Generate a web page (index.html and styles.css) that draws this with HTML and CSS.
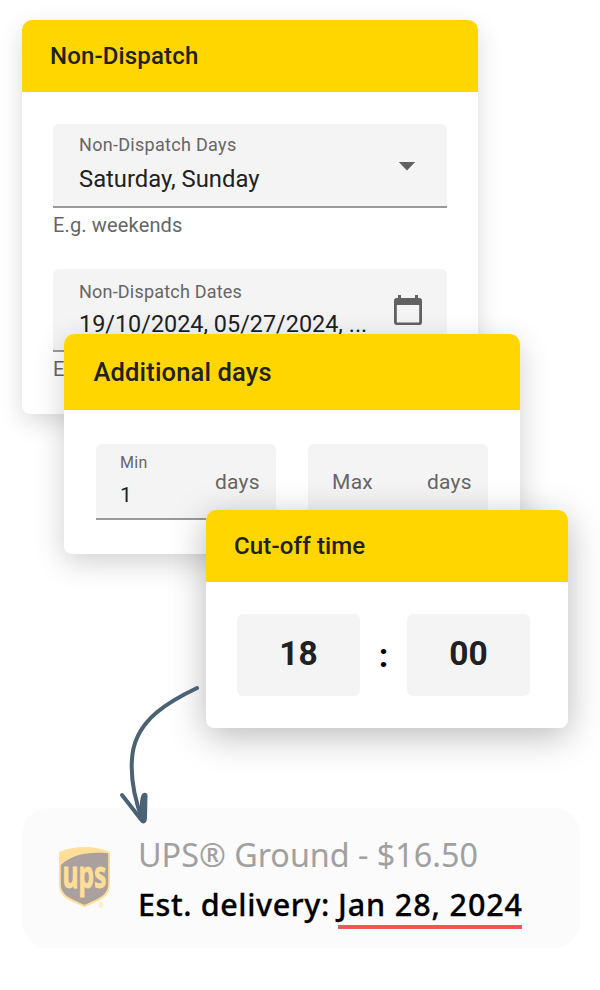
FILE: index.html
```
<!DOCTYPE html>
<html lang="en">
<head>
  <meta charset="UTF-8">
  <meta name="viewport" content="width=device-width, initial-scale=1.0">
  <title>Delivery Settings</title>
  <link rel="stylesheet" href="styles.css">
</head>
<body>

  <main class="page">
    <!-- Non-Dispatch -->
    <section class="card card-dispatch">
      <h2 class="card-title">Non-Dispatch</h2>
      <div class="card-body">
        <div class="field">
          <div class="field-text">
            <span class="label">Non-Dispatch Days</span>
            <span class="value value-days">Saturday, Sunday</span>
          </div>
          <svg class="arrow-down" width="18" height="9" viewBox="0 0 18 9"><path d="M.8 0h16.4L9 8.6z" fill="#616161"/></svg>
        </div>
        <p class="hint">E.g. weekends</p>

        <div class="field field-dates">
          <div class="field-text">
            <span class="label label-dates">Non-Dispatch Dates</span>
            <span class="value value-dates">19/10/2024, 05/27/2024, ...</span>
          </div>
          <svg class="calendar" width="28" height="31" viewBox="0 0 28 31">
            <path d="M4 0h3v3h14V0h3v3h1.200a2.800 2.800 0 0 1 2.800 2.800v21.400a2.800 2.800 0 0 1-2.800 2.800H2.800A2.800 2.800 0 0 1 0 28.200V5.800A2.800 2.800 0 0 1 2.800 3H4zM2.800 10v17.500h22.400V10z" fill="#616161" fill-rule="evenodd"/>
          </svg>
        </div>
        <p class="hint">E.g.</p>
      </div>
    </section>

    <!-- Additional days -->
    <section class="card card-days">
      <h2 class="card-title">Additional days</h2>
      <div class="card-body days-row">
        <div class="day-field">
          <div class="day-text">
            <span class="day-label">Min</span>
            <span class="day-value">1</span>
          </div>
          <span class="unit">days</span>
        </div>
        <div class="day-field">
          <span class="unit">Max</span>
          <span class="unit">days</span>
        </div>
      </div>
    </section>

    <!-- Cut-off time -->
    <section class="card card-time">
      <h2 class="card-title">Cut-off time</h2>
      <div class="card-body time-row">
        <div class="time-box">18</div>
        <span class="colon">:</span>
        <div class="time-box">00</div>
      </div>
    </section>

    <!-- Shipping option -->
    <section class="delivery">
      <svg class="ups" width="56" height="62" viewBox="0 0 56 62">
        <path d="M1 6Q26-4 52 6v32c0 11-7 14.500-15 18.500-5 2.500-8 3.500-10.500 4.800C24 60 21 59 16 56.500 8 52.500 1 49 1 38z" fill="#ffdf98"/>
        <path d="M2.800 19C14 8.500 30 5.500 50.200 7.200V38c0 9-6 12.500-14 16.500-5 2.500-7.500 3.300-9.700 4.500-2.200-1.200-4.700-2-9.700-4.500-8-4-14-7.500-14-16.500z" fill="#aaa09d"/>
        <text class="ups-text" x="4.500" y="41.500" textLength="44" lengthAdjust="spacingAndGlyphs">ups</text>
        <text class="ups-mark" x="40" y="62">®</text>
      </svg>
      <div class="delivery-text">
        <p class="service">UPS® Ground - $16.50</p>
        <p class="estimate"><span class="est-label">Est. delivery:</span><span class="date">Jan 28, 2024</span></p>
      </div>
    </section>

    <svg class="pointer" width="90" height="146" viewBox="0 0 90 146">
      <path d="M82 7C55 20 22 38 17.500 73c-3 24 2 45 10 66" />
      <path d="M7 114l19.500 25c2 2.500 3.500 1.500 3.500-2l.5-23c-2-1-3 2-3.500 7l-.5 14" />
      <path d="M29 118l-1 15" />
    </svg>
  </main>

</body>
</html>
```
FILE: styles.css
```
body {
  margin: 0;
  background: #fff;
  color: #212121;
  font-family: Roboto, sans-serif;
}

p, h2 {
  margin: 0;
}

.page {
  position: relative;
  display: flow-root;
  width: 600px;
  height: 990px;
  overflow: hidden;
}

.card {
  position: relative;
  box-sizing: border-box;
  background: #fff;
  border-radius: 10px 10px 8px 8px;
  box-shadow: 0 8px 24px rgba(0, 0, 0, 0.14);
}

.card-title {
  box-sizing: border-box;
  height: 71.600px;
  padding-left: 28px;
  background: #ffd600;
  border-radius: 10px 10px 0 0;
  font-size: 24px;
  font-weight: 500;
  line-height: 72px;
  letter-spacing: 0.150px;
}

.card-dispatch {
  width: 456px;
  height: 394px;
  margin: 20px 0 0 22px;
}

.card-dispatch .card-body {
  padding: 32.400px 31px 0;
}

.field {
  display: flex;
  justify-content: space-between;
  box-sizing: border-box;
  height: 84px;
  padding: 10px 25px 0 26px;
  background: #f4f4f4;
  border-bottom: 2px solid #999;
  border-radius: 6px 6px 0 0;
}

.field-text {
  display: flex;
  flex-direction: column;
}

.label {
  color: #666;
  font-size: 18px;
  line-height: 22px;
  letter-spacing: 0.300px;
}

.label-dates {
  letter-spacing: 0.200px;
}

.value {
  font-size: 23.800px;
  line-height: 28px;
  white-space: nowrap;
}

.value-days {
  margin-top: 9px;
}

.arrow-down {
  margin: 28px 6px 0 0;
}

.hint {
  color: #666;
  font-size: 20px;
  line-height: 24px;
  margin-top: 5px;
  letter-spacing: 0.150px;
}

.field-dates {
  margin-top: 32px;
  height: 83px;
  padding-top: 12px;
}

.value-dates {
  margin-top: 7px;
  font-size: 23.400px;
}

.calendar {
  flex: none;
  margin-top: 14px;
}

.card-days {
  width: 456px;
  height: 220px;
  margin: -80px 0 0 64px;
  box-shadow: 0 8px 30px rgba(0, 0, 0, 0.19);
}

.card-days .card-title {
  height: 76px;
  padding-left: 29.500px;
  font-size: 25.500px;
  line-height: 77px;
}

.days-row {
  display: flex;
  gap: 32px;
  padding: 34px 32px 0;
}

.day-field {
  display: flex;
  flex: 1;
  justify-content: space-between;
  box-sizing: border-box;
  height: 76px;
  padding: 0 16px 0 24px;
  background: #f4f4f4;
  border-bottom: 2px solid #999;
  border-radius: 6px 6px 0 0;
}

.day-text {
  display: flex;
  flex-direction: column;
  padding-top: 9px;
}

.day-label {
  color: #666;
  font-size: 16px;
  line-height: 20px;
  letter-spacing: 0.300px;
}

.day-value {
  margin-top: 10px;
  font-size: 21px;
  line-height: 24px;
}

.unit {
  color: #666;
  font-size: 21px;
  line-height: 77px;
  letter-spacing: 0.300px;
}

.card-time {
  width: 362px;
  height: 218px;
  margin: -44px 0 0 206px;
  box-shadow: 0 8px 36px rgba(0, 0, 0, 0.28);
}

.time-row {
  display: flex;
  gap: 16px;
  padding: 32.400px 38px 0 31px;
}

.time-box {
  flex: 1;
  height: 82px;
  background: #f4f4f4;
  border-radius: 6px;
  font-size: 33.500px;
  font-weight: 700;
  line-height: 79px;
  text-align: center;
}

.colon {
  width: 15px;
  color: #000;
  font-size: 34px;
  font-weight: 700;
  line-height: 83px;
  text-align: center;
}

.delivery {
  display: flex;
  box-sizing: border-box;
  width: 558px;
  height: 140px;
  margin: 80px 0 0 22px;
  padding: 25px 0 0 36px;
  background: #fbfbfb;
  border-radius: 26px;
  font-family: "Noto Sans", sans-serif;
}

.ups {
  margin-top: 13px;
  overflow: visible;
}

.ups-text {
  fill: #ffdf98;
  stroke: #ffdf98;
  stroke-width: 0.800px;
  font: 700 37px "Noto Sans", sans-serif;
}

.ups-mark {
  fill: #ffdf98;
  font: 7px "Noto Sans", sans-serif;
}

.delivery-text {
  margin-left: 24px;
  white-space: nowrap;
}

.service {
  color: #a0a0a0;
  font-size: 32.300px;
  line-height: 42px;
}

.estimate {
  display: flex;
  gap: 8px;
  margin-top: 8px;
  color: #000;
  font-size: 30.500px;
  font-weight: 500;
  line-height: 42px;
  letter-spacing: 0.600px;
  -webkit-text-stroke: 0.300px #000;
}

.date {
  width: 184px;
  border-bottom: 4px solid #f25555;
  letter-spacing: 0.900px;
}

.pointer {
  position: absolute;
  left: 115px;
  top: 681px;
}

.pointer path {
  fill: none;
  stroke: #4a6274;
  stroke-width: 4px;
  stroke-linecap: round;
  stroke-linejoin: round;
}
```
